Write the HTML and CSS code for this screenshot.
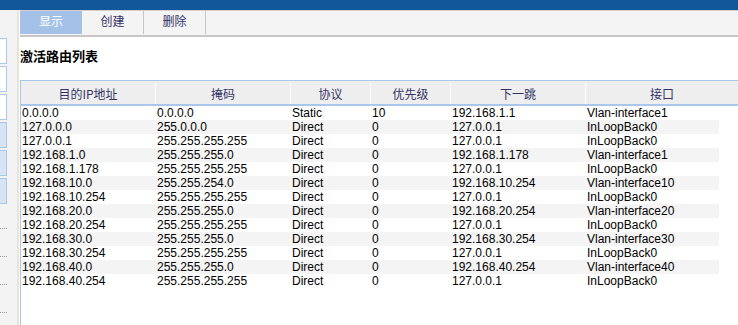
FILE: index.html
```html
<!DOCTYPE html>
<html lang="zh-CN">
<head>
<meta charset="UTF-8">
<title>激活路由列表</title>
<link rel="stylesheet" href="styles.css">
</head>
<body>
<div class="topbar"></div>
<div class="main">
	<div class="side">
		<div class="box"></div>
		<div class="box"></div>
		<div class="box"></div>
		<div class="box on"></div>
		<div class="box on"></div>
		<div class="box on"></div>
		<ul class="links">
			<li></li>
			<li></li>
			<li></li>
			<li></li>
		</ul>
	</div>
	<div class="strip"></div>
	<div class="content">
		<div class="tabs">
			<a href="javascript:;" class="active">显示</a>
			<a href="javascript:;">创建</a>
			<a href="javascript:;">删除</a>
		</div>
		<h2 class="title">激活路由列表</h2>
		<div class="list">
			<div class="head">
				<span>目的IP地址</span>
				<span>掩码</span>
				<span>协议</span>
				<span>优先级</span>
				<span>下一跳</span>
				<span>接口</span>
			</div>
			<div class="rows">
				<div class="row"><span>0.0.0.0</span><span>0.0.0.0</span><span>Static</span><span>10</span><span>192.168.1.1</span><span>Vlan-interface1</span></div>
				<div class="row"><span>127.0.0.0</span><span>255.0.0.0</span><span>Direct</span><span>0</span><span>127.0.0.1</span><span>InLoopBack0</span></div>
				<div class="row"><span>127.0.0.1</span><span>255.255.255.255</span><span>Direct</span><span>0</span><span>127.0.0.1</span><span>InLoopBack0</span></div>
				<div class="row"><span>192.168.1.0</span><span>255.255.255.0</span><span>Direct</span><span>0</span><span>192.168.1.178</span><span>Vlan-interface1</span></div>
				<div class="row"><span>192.168.1.178</span><span>255.255.255.255</span><span>Direct</span><span>0</span><span>127.0.0.1</span><span>InLoopBack0</span></div>
				<div class="row"><span>192.168.10.0</span><span>255.255.254.0</span><span>Direct</span><span>0</span><span>192.168.10.254</span><span>Vlan-interface10</span></div>
				<div class="row"><span>192.168.10.254</span><span>255.255.255.255</span><span>Direct</span><span>0</span><span>127.0.0.1</span><span>InLoopBack0</span></div>
				<div class="row"><span>192.168.20.0</span><span>255.255.255.0</span><span>Direct</span><span>0</span><span>192.168.20.254</span><span>Vlan-interface20</span></div>
				<div class="row"><span>192.168.20.254</span><span>255.255.255.255</span><span>Direct</span><span>0</span><span>127.0.0.1</span><span>InLoopBack0</span></div>
				<div class="row"><span>192.168.30.0</span><span>255.255.255.0</span><span>Direct</span><span>0</span><span>192.168.30.254</span><span>Vlan-interface30</span></div>
				<div class="row"><span>192.168.30.254</span><span>255.255.255.255</span><span>Direct</span><span>0</span><span>127.0.0.1</span><span>InLoopBack0</span></div>
				<div class="row"><span>192.168.40.0</span><span>255.255.255.0</span><span>Direct</span><span>0</span><span>192.168.40.254</span><span>Vlan-interface40</span></div>
				<div class="row"><span>192.168.40.254</span><span>255.255.255.255</span><span>Direct</span><span>0</span><span>127.0.0.1</span><span>InLoopBack0</span></div>
			</div>
		</div>
	</div>
</div>
</body>
</html>
```

FILE: styles.css
```css
html,
body {
	margin: 0;
	padding: 0;
	height: 100%;
	overflow: hidden;
}
body {
	display: flex;
	flex-direction: column;
	font: 12px "Liberation Sans", "Noto Sans CJK SC", sans-serif;
	color: #000;
	background: #fff;
}
ul {
	margin: 0;
	padding: 0;
	list-style: none;
}
a {
	text-decoration: none;
}
.topbar {
	height: 10px;
	background: #115799;
}
.main {
	flex: 1;
	display: flex;
	min-height: 0;
}
.side {
	width: 17px;
	padding-top: 28px;
	background: #f3f3f3;
}
.box {
	width: 6px;
	height: 24px;
	margin-bottom: 2px;
	border: 1px solid #a9c7ea;
	border-left: 0;
	background: #fff;
}
.box.on {
	background: #d6e4f5;
}
.links {
	margin-top: -5px;
}
.links li {
	width: 7px;
	height: 27px;
	border-bottom: 1px dotted #9a9a9a;
}
.strip {
	width: 2px;
	margin-right: 1px;
	background: #e8e4da;
}
.content {
	flex: 1;
	display: flex;
	flex-direction: column;
	min-width: 0;
}
.tabs {
	display: flex;
	height: 24px;
	border-top: 1px solid #d0d0d0;
	border-bottom: 2px solid #c6c6c6;
	background: #f4f4f4;
}
.tabs a {
	width: 61px;
	height: 23px;
	line-height: 20px;
	text-align: center;
	color: #333366;
	font-family: "Noto Sans CJK SC", sans-serif;
	border-right: 1px solid #c6c6c6;
}
.tabs .active {
	width: 62px;
	border-right: 0;
	background: #a4c2e8;
	color: #fff;
}
.title {
	margin: 10px 0 15px;
	height: 18px;
	line-height: 18px;
	font: bold 13px/18px "Noto Sans CJK SC", sans-serif;
}
.list {
	flex: 1;
	border-top: 1px solid #a9c7ea;
	border-left: 1px solid #a9c7ea;
}
.head {
	display: grid;
	grid-template-columns: 135px 135px 80px 80px 135px 1fr;
	height: 21px;
	padding-top: 2px;
	line-height: 21px;
	background: #eee;
	border-bottom: 2px solid #a9c7ea;
	color: #333366;
	font-family: "Noto Sans CJK SC", "Liberation Sans", sans-serif;
}
.head span {
	text-align: center;
	border-right: 1px solid #fff;
}
.head span:last-child {
	border-right: 0;
}
.rows {
	width: 698px;
}
.row {
	display: grid;
	grid-template-columns: 135px 135px 80px 80px 135px 133px;
	height: 14px;
	line-height: 14px;
}
.row:nth-child(even) {
	background: #f4f4f4;
}
.row span {
	padding-left: 1px;
	white-space: nowrap;
}
```
